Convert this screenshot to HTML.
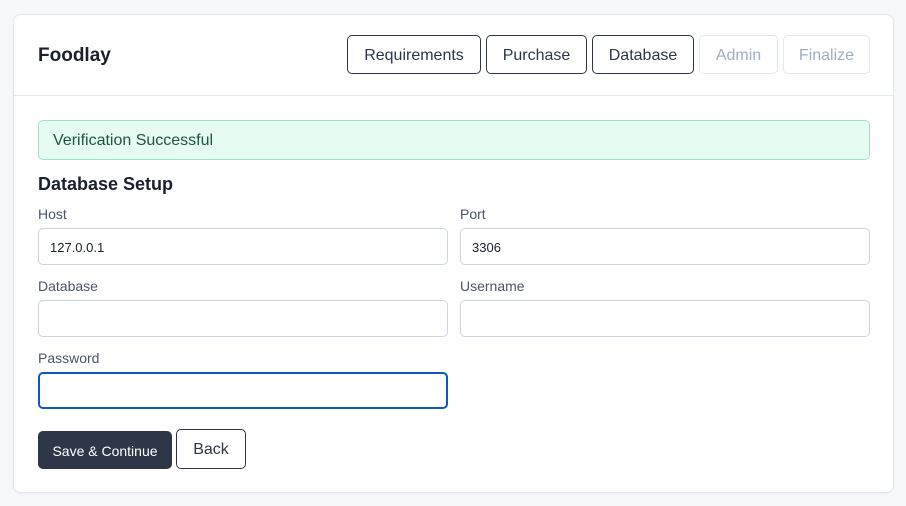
<!DOCTYPE html>
<html><head><style>
*{box-sizing:border-box;margin:0;padding:0}
body{width:906px;height:506px;background:#f7f8fa;font-family:"Liberation Sans",sans-serif;position:relative;overflow:hidden;color:#1a202c}
.card{position:absolute;left:13px;top:14px;width:881px;height:479px;background:#fff;border:1px solid #e2e8f0;border-radius:8px;box-shadow:0 1px 2px rgba(0,0,0,.05)}
.hr{position:absolute;left:14px;right:12px;top:95px;height:1px;background:#e2e8f0}
.a{position:absolute}
.logo{left:38px;top:45px;font-size:19px;font-weight:bold;color:#1a202c}
.tab{position:absolute;top:35px;height:39px;border:1px solid #2d3748;border-radius:5px;font-size:16px;color:#2d3748;display:flex;align-items:center;justify-content:center;background:#fff;padding-top:2px}
.tab.d{border-color:#e2e8f0;color:#a0aec0}
.alert{left:38px;top:120px;width:832px;height:40px;background:#e6fbf2;border:1px solid #9ae6c4;border-radius:5px;color:#22543d;font-size:16px;padding:11px 14px}
.h{left:38px;top:174px;font-size:18px;font-weight:bold}
.lbl{position:absolute;font-size:14px;color:#4a5568}
.in{position:absolute;width:410px;height:37px;border:1px solid #cbd5e0;border-radius:5px;font-size:13px;padding:11px 11px;color:#1a202c}
.btn{position:absolute;top:431px;height:38px;border-radius:5px;font-size:14px;display:flex;align-items:center;justify-content:center}
</style></head><body>
<div class="card"></div>
<div class="hr"></div>
<div class="a logo">Foodlay</div>
<div class="tab" style="left:347px;width:134px">Requirements</div>
<div class="tab" style="left:486px;width:101px">Purchase</div>
<div class="tab" style="left:592px;width:102px">Database</div>
<div class="tab d" style="left:699px;width:79px">Admin</div>
<div class="tab d" style="left:783px;width:87px">Finalize</div>
<div class="a alert">Verification Successful</div>
<div class="a h">Database Setup</div>
<div class="lbl" style="left:38px;top:206px">Host</div>
<div class="lbl" style="left:460px;top:206px">Port</div>
<div class="in" style="left:38px;top:228px">127.0.0.1</div>
<div class="in" style="left:460px;top:228px">3306</div>
<div class="lbl" style="left:38px;top:278px">Database</div>
<div class="lbl" style="left:460px;top:278px">Username</div>
<div class="in" style="left:38px;top:300px"></div>
<div class="in" style="left:460px;top:300px"></div>
<div class="lbl" style="left:38px;top:350px">Password</div>
<div class="in" style="left:38px;top:372px;border:2px solid #0b57c9"></div>
<div class="btn" style="left:38px;width:134px;background:#2d3748;color:#fff;padding-top:1px">Save &amp; Continue</div>
<div class="btn" style="left:176px;top:429px;width:70px;height:40px;border:1px solid #2d3748;color:#2d3748;font-size:16px;padding-top:2px">Back</div>
</body></html>
